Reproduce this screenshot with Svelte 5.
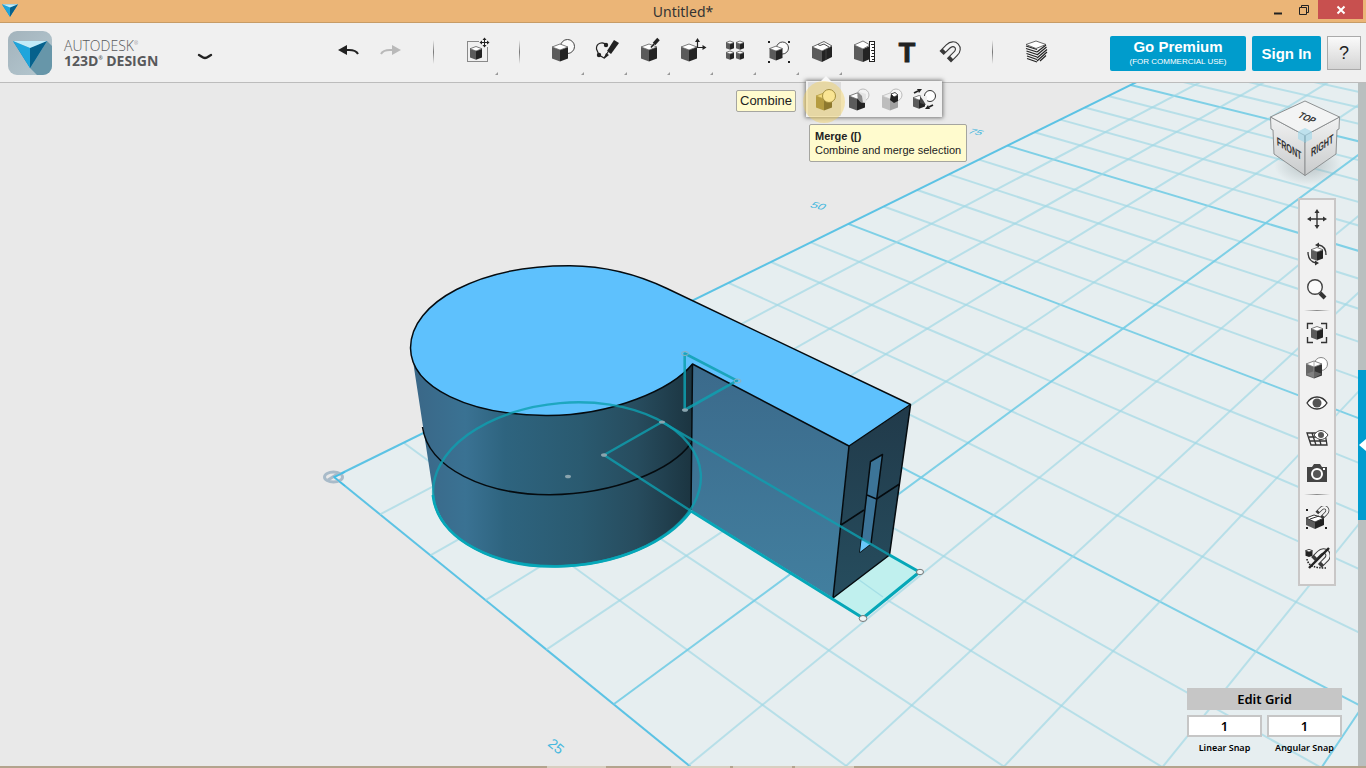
<script>
  let fileName = $state('Untitled*');
  let linearSnap = $state('1');
  let angularSnap = $state('1');
  let activeCombine = $state('merge');

  const tools = [
    { id: 'undo', label: 'Undo' },
    { id: 'redo', label: 'Redo' },
    { id: 'sep' },
    { id: 'transform', label: 'Transform', more: true },
    { id: 'sep' },
    { id: 'primitives', label: 'Primitives', more: true },
    { id: 'sketch', label: 'Sketch', more: true },
    { id: 'construct', label: 'Construct', more: true },
    { id: 'modify', label: 'Modify', more: true },
    { id: 'pattern', label: 'Pattern', more: true },
    { id: 'grouping', label: 'Grouping', more: true },
    { id: 'combine', label: 'Combine', more: true },
    { id: 'measure', label: 'Measure' },
    { id: 'text', label: 'Text' },
    { id: 'snap', label: 'Snap' },
    { id: 'sep' },
    { id: 'material', label: 'Material' }
  ];

  const combineTools = [
    { id: 'merge', label: 'Merge' },
    { id: 'subtract', label: 'Subtract' },
    { id: 'intersect', label: 'Intersect' },
    { id: 'separate', label: 'Separate' }
  ];

  const navTools = [
    { id: 'pan', label: 'Pan' },
    { id: 'orbit', label: 'Orbit' },
    { id: 'zoom', label: 'Zoom' },
    { id: 'sep' },
    { id: 'fit', label: 'Fit' },
    { id: 'shade', label: 'Materials and outlines' },
    { id: 'eye', label: 'Show and hide' },
    { id: 'grid', label: 'Grid visibility' },
    { id: 'camera', label: 'Screenshot' },
    { id: 'sep' },
    { id: 'groupsnap', label: 'Group when snapping', tall: true },
    { id: 'nosnap', label: 'Snapping off', tall: true }
  ];

  // ground plane to screen, u runs up the left edge and v down it
  function project(u, v) {
    const w = 1 + 0.04114 * u - 0.0424 * v;
    return [(334 + 86.34 * u + 29.92 * v) / w, (477 - 16.1 * u + 15.6 * v) / w];
  }

  function gridLine(u1, v1, u2, v2) {
    const [x1, y1] = project(u1, v1);
    const [x2, y2] = project(u2, v2);
    return { x1, y1, x2, y2 };
  }

  const U_MAX = 45;
  const V_MAX = 20;
  const gridLines = [];
  for (let u = 0; u <= U_MAX; u++) {
    gridLines.push({ ...gridLine(u, 0, u, V_MAX), major: u % 5 === 0, edge: u === 0 });
  }
  for (let v = 0; v <= V_MAX; v++) {
    gridLines.push({ ...gridLine(0, v, U_MAX, v), major: v % 5 === 0, edge: v === 0 });
  }
  const floor = [[0, 0], [U_MAX, 0], [U_MAX, V_MAX], [0, V_MAX]].map(([u, v]) => project(u, v).join(',')).join(' ');
</script>

{#snippet cube(x, y, s, left = '#5b5b5b', right = '#232323', top = '#fff')}
  {@const d = s * 0.375}
  {@const h = s * 1.45}
  <polygon points="{x - s},{y - d} {x},{y} {x},{y + h} {x - s},{y + h - d}" fill={left} />
  <polygon points="{x + s},{y - d} {x},{y} {x},{y + h} {x + s},{y + h - d}" fill={right} />
  <polygon points="{x},{y - 2 * d} {x + s},{y - d} {x},{y} {x - s},{y - d}" fill={top} stroke={left} stroke-width="0.8" />
{/snippet}

{#snippet magnet()}
  <path d="M-7 0L0 -7C7 -14 15 -5 8 1L1 8" fill="none" stroke="#3a3a3a" stroke-width="6.4" />
  <path d="M-4 -3L0 -7C7 -14 15 -5 8 1L4 5" fill="none" stroke="#f4f4f4" stroke-width="4" />
{/snippet}

{#snippet logo()}
  <polygon points="0,0 34,0 17,27" fill="#0a7fb2" />
  <polygon points="0,0 17,7 17,27" fill="#1ea5dc" />
  <polygon points="34,0 17,7 17,27" fill="#06618c" />
  <polygon points="0,0 34,0 17,7" fill="#c3ebf8" />
{/snippet}

{#snippet toolIcon(id)}
  {#if id === 'undo'}
    <path d="M-9 -2L0 -7V3Z" fill="#222" />
    <path d="M-1 -2H2C7 -2 10 0 11 2" fill="none" stroke="#222" stroke-width="2" />
  {:else if id === 'redo'}
    <path d="M11 -2L2 -7V3Z" fill="#b9b9b9" />
    <path d="M3 -2H0C-5 -2 -8 0 -9 2" fill="none" stroke="#b9b9b9" stroke-width="2" />
  {:else if id === 'transform'}
    <rect x="-8.5" y="-10.5" width="20" height="20" fill="none" stroke="#222" stroke-dasharray="1 1" />
    <rect x="3" y="-15" width="11" height="10" fill="#f0f0f0" />
    {@render cube(0, -1, 6)}
    <path d="M8.500 -13V-6M5 -9.500H12" stroke="#222" />
    <path d="M8.500 -14.500L6.500 -12H10.500ZM8.500 -4.500L6.500 -7H10.500ZM3.500 -9.500L6 -11.500V-7.500ZM13.500 -9.500L11 -11.500V-7.500Z" fill="#222" />
  {:else if id === 'primitives'}
    <circle cx="5.500" cy="-5.500" r="7" fill="#fafafa" stroke="#444" />
    {@render cube(-2, -2, 8)}
  {:else if id === 'sketch'}
    <path d="M1 -7C-2 -11 -9 -9 -8.500 -3L-6 3L-1 6L3 0" fill="none" stroke="#222" stroke-width="1.200" />
    <circle cx="1" cy="-7" r="2.200" fill="#222" />
    <circle cx="-6" cy="3" r="2.200" fill="#222" />
    <path d="M9 -12L14 -9L6 2L2 -1Z" fill="#222" />
    <path d="M1 1L4 3L-1 7Z" fill="#222" />
  {:else if id === 'construct'}
    {@render cube(1, -2, 8)}
    <path d="M10.500 -13L6 -8" stroke="#222" stroke-width="3.400" />
    <path d="M6 -8L3 -4.500" stroke="#222" stroke-width="1.600" />
  {:else if id === 'modify'}
    {@render cube(-2, -2, 8)}
    <path d="M6.500 -11V-4.500H13" fill="none" stroke="#222" stroke-width="1.200" />
    <path d="M6.500 -14L4 -10H9ZM15.500 -4.500L11.500 -7V-2Z" fill="#222" />
  {:else if id === 'pattern'}
    {#each [[-4, -8], [6, -8], [-4, 2], [6, 2]] as [x, y]}
      {@render cube(x, y, 4)}
    {/each}
  {:else if id === 'grouping'}
    <circle cx="5.500" cy="-4" r="6" fill="#fafafa" stroke="#444" />
    {@render cube(-1, -1, 6.500)}
    <path d="M-9 -11h2v2h-2ZM11 -11h2v2h-2ZM-9 9h2v2h-2ZM11 9h2v2h-2Z" fill="#222" />
  {:else if id === 'combine'}
    <path d="M-8 -5L2 -1V10L-8 6Z" fill="#5b5b5b" />
    <path d="M2 -1L12 -6V5L2 10Z" fill="#232323" />
    <path d="M-8 -5L4 -10.500L12 -6L2 -1Z" fill="#fff" stroke="#444" stroke-width="0.800" />
    <path d="M-2 -7.500L0 -6.500L4 -8L9 -5" fill="none" stroke="#333" stroke-width="0.900" />
    <path d="M6 -3V8" stroke="#555" stroke-width="0.600" />
  {:else if id === 'measure'}
    <path d="M-9 -7L0 -3V10L-9 7Z" fill="#5b5b5b" />
    <path d="M0 -3L7 -6V7L0 10Z" fill="#232323" />
    <path d="M-9 -7L0 -11L7 -7L0 -3Z" fill="#fff" stroke="#555" stroke-width="0.800" />
    <rect x="6.500" y="-10.500" width="5" height="20" fill="#fff" stroke="#222" />
    <path d="M8 -7.500h3M9 -4.500h2M8 -1.500h3M9 1.500h2M8 4.500h3M9 7.500h2" stroke="#222" />
  {:else if id === 'text'}
    <text x="1" y="10" text-anchor="middle" class="letter">T</text>
  {:else if id === 'snap'}
    <g transform="translate(-1 1) scale(0.920)">{@render magnet()}</g>
  {:else if id === 'material'}
    <path d="M-9 -8L1 -3.500L11 -8V4L1 10L-8 6Z" fill="#f0f0f0" />
    <path d="M-9 -6L2 -2.500M-9 -3.500L2 0M-8.500 -1L2 2.500M-8.500 1.500L2 5M-8 4L2 7.500M-8 6.500L2 10" fill="none" stroke="#222" stroke-width="1.200" />
    <path d="M2 0L11 -7M2 3L11.500 -5M2 6L12 -2.500M2 9L12 0M5 9L11 3.500" stroke="#222" stroke-width="1.200" />
    <path d="M-9 -7.500L1 -11L11 -7.500L1 -3.500Z" fill="#fff" stroke="#444" stroke-width="0.800" />
  {/if}
{/snippet}

{#snippet combineIcon(id)}
  {#if id === 'merge'}
    {@render cube(-1, -1, 8, '#8a7a38', '#4a4018', '#efe09a')}
    <circle cx="4" cy="-4" r="6.500" fill="#fdf3c0" stroke="#6e6434" />
  {:else if id === 'subtract'}
    <circle cx="5" cy="-5" r="6" fill="#f2f2f2" stroke="#bbb" />
    {@render cube(-1, -1, 8)}
    <path d="M1 -8C-2 -3 1 3 8 3V-6Z" fill="#e4e4e4" />
    <path d="M0 -8C-2 -3 1 3 5 3L4 -4Z" fill="#8b8b8b" />
  {:else if id === 'intersect'}
    <circle cx="5" cy="-5" r="6" fill="#f6f6f6" stroke="#bbb" />
    {@render cube(-1, -1, 8, '#bdbdbd', '#a2a2a2', '#eee')}
    <path d="M0 -6L4 -7.500L7 -5V1L3 3L-1 0Z" fill="#222" />
    <path d="M0 -6L4 -7.500L7 -5L3 -3Z" fill="#fff" stroke="#333" stroke-width="0.800" />
  {:else}
    <circle cx="6" cy="-4" r="5.500" fill="#fff" stroke="#333" />
    {@render cube(-5, 0, 6)}
    <path d="M-3 -4C-4 1 -1 4 3 4V-4Z" fill="#eee" />
    <path d="M-4 -4L-1 0L2 5L-4 3Z" fill="#444" />
    <path d="M-10 -7L-6 -9M9 5L5 7" stroke="#222" stroke-width="1.800" />
    <path d="M-2 -11L-7 -11L-5 -7ZM1 9L6 9L4 5Z" fill="#222" />
  {/if}
{/snippet}

{#snippet navIcon(id)}
  {#if id === 'pan'}
    <path d="M0 -8V8M-8 0H8" stroke="#333" stroke-width="1.400" />
    <path d="M0 -10L-2.500 -6H2.500ZM0 10L-2.500 6H2.500ZM-10 0L-6 -2.500V2.500ZM10 0L6 -2.500V2.500Z" fill="#333" />
  {:else if id === 'orbit'}
    {@render cube(0, -2, 6)}
    <path d="M2 -9C7 -8 9 -4 9 1M-9 -2C-9 4 -6 8 -1 9" fill="none" stroke="#333" stroke-width="1.300" />
    <path d="M-2 -9L2 -11.500V-6.500ZM2 9L-2 6.500V11.500Z" fill="#333" />
  {:else if id === 'zoom'}
    <circle cx="-2" cy="-2" r="7.300" fill="#fafafa" stroke="#444" stroke-width="1.400" />
    <path d="M3 4L8 9" stroke="#333" stroke-width="4" />
  {:else if id === 'fit'}
    {@render cube(0, -2, 6)}
    <path d="M-9.500 -4V-9.500H-4M4 -9.500H9.500V-4M9.500 4V9.500H4M-4 9.500H-9.500V4" fill="none" stroke="#333" stroke-width="1.400" />
  {:else if id === 'shade'}
    <circle cx="4" cy="-4" r="6.500" fill="#fff" stroke="#888" />
    {@render cube(-3, -1, 8, '#666', '#333')}
    <path d="M-11 6L-3 3L5 6L-3 10Z" fill="#999" opacity="0.500" />
    <path d="M-3 -7V3" stroke="#999" stroke-width="0.800" />
  {:else if id === 'eye'}
    <path d="M-10 0C-5 -8 5 -8 10 0C5 8 -5 8 -10 0Z" fill="#fff" stroke="#333" stroke-width="1.300" />
    <circle r="4.500" fill="#555" />
  {:else if id === 'grid'}
    <path d="M-10 -5H8L10 7H-6ZM-8 -1H9M-7 3H10M-5 -5L-1 7M1 -5L4 7" fill="none" stroke="#333" stroke-width="1.300" />
    <path d="M-3 -3C1 -9 7 -9 11 -3C7 3 1 3 -3 -3Z" fill="#fff" stroke="#444" />
    <circle cx="4" cy="-3" r="3" fill="#555" />
  {:else if id === 'camera'}
    <path d="M-10 -6H-5L-3 -9H3L5 -6H10V9H-10Z" fill="#444" />
    <circle cx="0" cy="1" r="5" fill="#555" stroke="#fff" stroke-width="2" />
    <rect x="6" y="-5" width="2" height="2" fill="#fff" />
  {:else if id === 'groupsnap'}
    <path d="M-11 -1L-2 3V10L-11 6Z" fill="#5b5b5b" />
    <path d="M-2 3L7 -1V6L-2 10Z" fill="#232323" />
    <path d="M-11 -1L-3 -4L7 -1L-2 3Z" fill="#fff" stroke="#333" />
    <path d="M-7 0L2 -3" stroke="#333" />
    <g transform="translate(4 -6) scale(0.600)">{@render magnet()}</g>
    <path d="M-11 -10h2v2h-2ZM-11 8h2v2h-2ZM8 8h2v2h-2Z" fill="#222" />
  {:else}
    {@render cube(-8, -7, 3.500, '#222', '#222')}
    <path d="M-10 0C-9 7 -2 9 9 9" fill="none" stroke="#222" stroke-width="1.600" stroke-dasharray="1.500 1.200" />
    <g transform="translate(2 0) scale(0.850)">{@render magnet()}</g>
    <path d="M-8 9L12 -11" stroke="#222" stroke-width="2.400" />
  {/if}
{/snippet}

<div class="app">
  <header class="titlebar">
    <svg class="app-icon" viewBox="0 0 34 27" aria-hidden="true">{@render logo()}</svg>
    <h1>{fileName}</h1>
    <div class="window-buttons">
      <button aria-label="Minimize"><svg viewBox="0 0 12 12"><path d="M2 9.500H10" stroke="#222" stroke-width="2" /></svg></button>
      <button aria-label="Restore"><svg viewBox="0 0 12 12"><path d="M1.500 3.500H8.500V10.500H1.500ZM3.500 3V1.500H10.500V8.500H9" fill="none" stroke="#222" /></svg></button>
      <button class="close" aria-label="Close"><svg viewBox="0 0 12 12"><path d="M2.500 2.500L9.500 9.500M9.500 2.500L2.500 9.500" stroke="#fff" stroke-width="2" /></svg></button>
    </div>
  </header>

  <div class="toolbar">
    <div class="brand">
      <svg class="brand-logo" viewBox="0 0 44 44" aria-hidden="true">
        <defs>
          <linearGradient id="tile" x1="0" y1="0" x2="1" y2="1">
            <stop offset="0" stop-color="#a3b3bc" />
            <stop offset="1" stop-color="#b5c8d0" />
          </linearGradient>
          <clipPath id="tileclip"><rect width="44" height="44" rx="9" /></clipPath>
        </defs>
        <g clip-path="url(#tileclip)">
          <rect width="44" height="44" fill="url(#tile)" />
          <path d="M39 10L44 15V44H29L22 37Z" fill="#6796a9" />
        </g>
        <g transform="translate(5 10)">{@render logo()}</g>
      </svg>
      <div class="brand-name">
        <span class="light">AUTODESK<sup>®</sup></span>
        <span class="heavy">123D<sup>®</sup> DESIGN</span>
      </div>
      <button class="menu-toggle" aria-label="Application menu">
        <svg viewBox="0 0 16 8"><path d="M2 2C4 3 6 5 8 5C10 5 12 3 14 2" fill="none" stroke="#222" stroke-width="2.400" stroke-linecap="round" /></svg>
      </button>
    </div>

    <div class="tools">
      {#each tools as tool}
        {#if tool.id === 'sep'}
          <span class="separator"></span>
        {:else}
          <button class="tool" aria-label={tool.label}>
            <svg viewBox="-21 -29 43 59">
              {@render toolIcon(tool.id)}
              {#if tool.more}<path d="M22 20V23H19Z" fill="#999" />{/if}
            </svg>
          </button>
        {/if}
      {/each}
    </div>

    <div class="account">
      <button class="premium"><strong>Go Premium</strong><small>(FOR COMMERCIAL USE)</small></button>
      <button class="signin">Sign In</button>
      <button class="help">?</button>
    </div>
  </div>

  <main class="workspace">
    <svg class="scene" viewBox="0 83 1366 683" preserveAspectRatio="xMidYMid slice" aria-label="Model view">
      <defs>
        <linearGradient id="cylinder" gradientUnits="userSpaceOnUse" x1="412" y1="0" x2="693" y2="0">
          <stop offset="0" stop-color="#3a6787" />
          <stop offset="0.190" stop-color="#3a7293" />
          <stop offset="0.330" stop-color="#2e647f" />
          <stop offset="0.600" stop-color="#2a5a70" />
          <stop offset="0.800" stop-color="#274c5e" />
          <stop offset="1" stop-color="#1b3440" />
        </linearGradient>
        <linearGradient id="wall" x1="0" y1="0" x2="0" y2="1">
          <stop offset="0" stop-color="#3b6a8b" />
          <stop offset="1" stop-color="#427f9f" />
        </linearGradient>
        <linearGradient id="end" x1="0" y1="0" x2="0" y2="1">
          <stop offset="0" stop-color="#213a4a" />
          <stop offset="1" stop-color="#264d5e" />
        </linearGradient>
        <linearGradient id="cubeface" x1="0" y1="0" x2="0" y2="1">
          <stop offset="0" stop-color="#f1f2f2" />
          <stop offset="1" stop-color="#c9cbcc" />
        </linearGradient>
        <radialGradient id="shadow">
          <stop offset="0" stop-color="#8a9699" stop-opacity="0.500" />
          <stop offset="1" stop-color="#8a9699" stop-opacity="0" />
        </radialGradient>
      </defs>

      <polygon points={floor} fill="#e6eef0" />
      {#each gridLines as line}
        <line
          x1={line.x1}
          y1={line.y1}
          x2={line.x2}
          y2={line.y2}
          class="grid-line"
          class:major={line.major}
          class:edge={line.edge}
        />
      {/each}

      <g class="grid-label">
        <text transform="translate(547 745) rotate(40)">25</text>
        <text transform="matrix(0.900 0.200 -0.500 0.550 809 207)">50</text>
        <text transform="matrix(0.850 0.150 -0.500 0.450 967 133)">75</text>
      </g>

      <g fill="none" stroke="#a9bbc9" stroke-width="3">
        <ellipse cx="333.500" cy="477" rx="9" ry="5" />
        <path d="M328 480L339 473" />
      </g>
      <path d="M345 472L334 477L345 486" fill="none" stroke="#45bde4" stroke-width="1.500" />

      <polygon points="833,598 889,555 919,572 863,618" fill="#c0f0ee" />
      <path d="M855 577L883 597" stroke="#a5dfe6" stroke-width="1.500" />

      <!-- extruded body -->
      <path d="M411 348L433 492C438 540 496 569 558 566.500C618 565 668 542 691 510L692.500 364L560 300Z" fill="url(#cylinder)" />
      <polygon points="692.500,364 849,446 833,598 691,510" fill="url(#wall)" />
      <polygon points="849,446 910.500,405 889.500,555 833,598" fill="url(#end)" />
      <g stroke="#050b0f" stroke-width="1.500" fill="none" stroke-linejoin="round">
        <path d="M410.500 348C410.500 302 480 265.500 570 265.700C610 266 641 276 667 288.500L910.500 404.500L849 446L692.500 364C672 389 612 416 546 415.500C470 415 411 388 410.500 348Z" fill="#5ec1fd" />
        <path d="M422.500 427C428 468 485 495 550 494.700C615 494 672 470 691 443" />
        <path d="M692.500 364L691 510M849 446L833 598L889.500 555L910.500 405M841 525L864 510M876.500 499L899.500 484" />
        <path d="M870.500 461.500L882.500 454.500L871 543.500L860 552Z" fill="#3c7498" />
        <path d="M861.500 540L871 543.500L860 552Z" fill="#6bc6f9" stroke="none" />
        <path d="M867 495L876.500 499" />
      </g>

      <!-- sketch outlines seen through the body -->
      <g fill="none" stroke="#0ea0b0" stroke-linejoin="round">
        <ellipse cx="567" cy="484.300" rx="134.200" ry="81.500" transform="rotate(-4.800 567 484.300)" stroke-width="2.400" opacity="0.800" />
        <path d="M432.800 495C438 540 496 568 558 566.500C618 565 668 542 691 511" stroke-width="2.600" stroke="#05a7b8" />
        <path d="M691 511L604 455L662 422L889.500 555" stroke-width="2.400" opacity="0.800" />
        <path d="M691 511L863 618L919.500 572L889.500 555" stroke-width="3" stroke="#05a7b8" />
        <path d="M684.700 353.500L737 380.700L684.700 410Z" stroke-width="2.600" opacity="0.850" />
      </g>
      <g fill="#8aa4ae">
        <ellipse cx="568" cy="476.500" rx="3" ry="1.800" />
        <ellipse cx="604" cy="455" rx="3" ry="1.800" />
        <ellipse cx="662" cy="422" rx="3" ry="1.600" />
        <ellipse cx="685" cy="410" rx="3" ry="1.800" />
      </g>
      <g fill="none" stroke="#8fb1bd">
        <ellipse cx="685" cy="353.500" rx="3.500" ry="2" />
        <ellipse cx="737.500" cy="381" rx="3.500" ry="2" />
      </g>
      <g fill="#eef4f5" stroke="#777">
        <ellipse cx="920" cy="572" rx="3.500" ry="2.700" />
        <ellipse cx="863" cy="618.500" rx="3.800" ry="3" />
      </g>

      <!-- view cube -->
      <ellipse cx="1308" cy="165" rx="34" ry="20" fill="url(#shadow)" />
      <g stroke="#8e9192" stroke-width="1">
        <path d="M1270.500 117L1305 135.500V175.500L1274 154L1273 130L1271 129Z" fill="url(#cubeface)" />
        <path d="M1339.500 117L1305 135.500V175.500L1336 154L1337 130L1339 129Z" fill="url(#cubeface)" />
        <path d="M1305 101L1339.500 117L1305 135.500L1270.500 117Z" fill="#f3f4f4" />
      </g>
      <path d="M1305 128L1312 131.500V139L1305 142.500L1298 139V131.500Z" fill="#a6d8ea" opacity="0.700" />
      <path d="M1305 135.500V143" stroke="#7fa9b8" />
      <g class="cube-label">
        <text transform="matrix(0.600 0.370 0.050 1 1277 145)">FRONT</text>
        <text transform="matrix(0.600 -0.400 0 1 1311 157)">RIGHT</text>
        <text transform="matrix(0.620 0.280 -0.600 0.600 1297 117)">TOP</text>
      </g>
    </svg>

    <div class="combine-menu">
      {#each combineTools as tool}
        <button
          class="combine-tool"
          class:active={activeCombine === tool.id}
          aria-label={tool.label}
          onclick={() => (activeCombine = tool.id)}
        >
          <svg viewBox="-17 -18 33 34">{@render combineIcon(tool.id)}</svg>
        </button>
      {/each}
      <span class="halo"></span>
    </div>
    <span class="tip tip-name">Combine</span>
    <div class="tip tip-detail" role="tooltip">
      <strong>Merge ([)</strong>
      <span>Combine and merge selection</span>
    </div>

    <nav class="nav-bar">
      {#each navTools as tool}
        {#if tool.id === 'sep'}
          <span class="nav-separator"></span>
        {:else}
          <button class="nav-tool" class:tall={tool.tall} aria-label={tool.label}>
            <svg viewBox="-13 -13 26 26">{@render navIcon(tool.id)}</svg>
          </button>
        {/if}
      {/each}
    </nav>

    <div class="snap-panel">
      <button class="edit-grid">Edit Grid</button>
      <div class="snap-field">
        <input id="linear" bind:value={linearSnap} />
        <label for="linear">Linear Snap</label>
      </div>
      <div class="snap-field">
        <input id="angular" bind:value={angularSnap} />
        <label for="angular">Angular Snap</label>
      </div>
    </div>

    <aside class="side-rail">
      <button aria-label="Open parts panel"><svg viewBox="0 0 8 14"><path d="M8 1V13L1 7Z" fill="#fff" /></svg></button>
    </aside>
  </main>

  <footer class="taskbar"><span></span><span></span><span></span><span></span></footer>
</div>

<style>
  :global(body) {
    margin: 0;
  }

  .app {
    display: flex;
    flex-direction: column;
    min-height: 100vh;
    font-family: "Liberation Sans", Arial, sans-serif;
    color: #222;
    background: #e9e9e9;
  }

  button {
    padding: 0;
    border: 0;
    background: none;
    font-family: inherit;
    color: inherit;
    cursor: pointer;
  }

  svg {
    display: block;
  }

  .titlebar {
    display: grid;
    grid-template-columns: 1fr auto 1fr;
    height: 22px;
    background: #ebb577;
    border-bottom: 1px solid #c79c66;
  }

  .app-icon {
    width: 16px;
    height: 13px;
    margin: 4px 0 0 2px;
  }

  h1 {
    margin: 0;
    font: 400 14px/24px "Noto Sans", sans-serif;
    color: #333;
  }

  .window-buttons {
    display: flex;
    justify-content: flex-end;
    align-items: flex-start;
    padding-right: 3px;
  }

  .window-buttons button {
    display: flex;
    align-items: center;
    justify-content: center;
    width: 26px;
    height: 19px;
  }

  .window-buttons svg {
    width: 12px;
    height: 12px;
  }

  .window-buttons .close {
    width: 45px;
    margin-left: 1px;
    background: #c8504f;
  }

  .toolbar {
    display: flex;
    height: 59px;
    background: #f0f0f0;
    border-bottom: 1px solid #bcbcbc;
  }

  .brand {
    display: flex;
    align-items: center;
    flex: 0 0 318px;
    padding-left: 8px;
  }

  .brand-logo {
    width: 44px;
    height: 44px;
  }

  .brand-name {
    display: flex;
    flex-direction: column;
    width: 133px;
    margin-left: 12px;
    font: 14px/15px "Open Sans", "Noto Sans", sans-serif;
    color: #58595b;
  }

  .brand-name .light {
    font-weight: 300;
  }

  .brand-name .heavy {
    font-weight: 700;
  }

  .brand-name sup {
    font-size: 5px;
    line-height: 1px;
    vertical-align: 6px;
  }

  .menu-toggle {
    margin-top: 8px;
  }

  .menu-toggle svg {
    width: 16px;
    height: 8px;
  }

  .tools {
    display: flex;
  }

  .tool svg {
    width: 43px;
    height: 59px;
  }

  .letter {
    font-size: 27px;
    font-weight: 700;
    fill: #222;
    stroke: #222;
    stroke-width: 1px;
  }

  .separator {
    width: 1px;
    height: 24px;
    margin: 17px 21px 0;
    background: linear-gradient(#f0f0f0, #777, #f0f0f0);
  }

  .account {
    display: flex;
    gap: 6px;
    margin: 13px 5px 0 auto;
  }

  .premium,
  .signin {
    height: 35px;
    border-radius: 2px;
    background: #009ccc;
    color: #fff;
    font-size: 15px;
    font-weight: 700;
  }

  .premium {
    width: 136px;
  }

  .premium strong {
    display: block;
    line-height: 17px;
  }

  .premium small {
    display: block;
    font-size: 8px;
    font-weight: 400;
    line-height: 14px;
  }

  .signin {
    width: 69px;
  }

  .help {
    width: 34px;
    height: 34px;
    border: 1px solid #aaa;
    background: linear-gradient(#fafafa, #d4d4d4);
    font-size: 18px;
  }

  .workspace {
    position: relative;
    flex: 1;
  }

  .scene {
    position: absolute;
    inset: 0;
    width: 100%;
    height: 100%;
    overflow: hidden;
  }

  .grid-line {
    stroke: #9fd8e5;
    stroke-width: 2;
    opacity: 0.65;
  }

  .grid-line.major {
    stroke: #74cde6;
    opacity: 0.9;
  }

  .grid-line.edge {
    stroke: #4dbfe4;
  }

  .grid-label {
    font-size: 14px;
    fill: #45b8de;
  }

  .cube-label {
    font-size: 12px;
    font-weight: 700;
    fill: #333;
  }

  .combine-menu {
    position: absolute;
    top: -2px;
    left: 806px;
    display: flex;
    height: 34px;
    padding: 1px 2px;
    background: #f1f1f1;
    box-shadow: 0 0 4px 1px #777;
  }

  .combine-menu::before {
    content: "";
    position: absolute;
    top: -5px;
    left: 14px;
    border: 6px solid transparent;
    border-top: 0;
    border-bottom-color: #f8f8f8;
  }

  .combine-tool.active {
    background: #dcdcdc;
  }

  .combine-tool svg {
    width: 33px;
    height: 34px;
  }

  .halo {
    position: absolute;
    top: 0;
    left: -3px;
    width: 42px;
    height: 42px;
    border-radius: 50%;
    background: #f5cf50;
    opacity: 0.4;
    pointer-events: none;
  }

  .tip {
    position: absolute;
    border: 1px solid #a5a5a0;
    border-radius: 2px;
    background: #fffbce;
    white-space: nowrap;
  }

  .tip-name {
    top: 7px;
    left: 736px;
    padding: 0 3px;
    font-size: 13px;
    line-height: 20px;
  }

  .tip-detail {
    top: 41px;
    left: 809px;
    padding: 4px 5px;
    font-size: 11px;
    line-height: 14px;
  }

  .tip-detail strong,
  .tip-detail span {
    display: block;
  }

  .nav-bar {
    position: absolute;
    top: 115px;
    right: 30px;
    display: flex;
    flex-direction: column;
    width: 34px;
    padding: 1px 0 5px;
    border: 2px solid #c9c7c7;
    background: #f1f1f1;
  }

  .nav-tool {
    display: flex;
    align-items: center;
    justify-content: center;
    height: 35px;
  }

  .nav-tool.tall {
    height: 40px;
  }

  .nav-tool svg {
    width: 26px;
    height: 26px;
  }

  .nav-separator {
    height: 1px;
    margin: 4px;
    background: linear-gradient(90deg, #f1f1f1, #888, #f1f1f1);
  }

  .snap-panel {
    position: absolute;
    right: 24px;
    bottom: 11px;
    display: grid;
    grid-template-columns: 75px 75px;
    gap: 5px;
    font-family: "Noto Sans", sans-serif;
    color: #000;
  }

  .edit-grid {
    grid-column: 1 / 3;
    height: 22px;
    background: #c6c6c6;
    font-size: 13px;
    font-weight: 600;
  }

  .snap-field {
    display: flex;
    flex-direction: column;
    align-items: center;
  }

  .snap-field input {
    box-sizing: border-box;
    width: 100%;
    height: 22px;
    padding: 0;
    border: 2px solid #c6c6c6;
    border-radius: 0;
    background: #fff;
    font: 600 13px "Noto Sans", sans-serif;
    text-align: center;
  }

  .snap-field label {
    margin-top: 4px;
    font-size: 9px;
    font-weight: 600;
    line-height: 14px;
  }

  .side-rail {
    position: absolute;
    top: 0;
    right: 0;
    bottom: 0;
    width: 8px;
    background: #b9bfbf;
  }

  .side-rail button {
    display: flex;
    align-items: center;
    width: 8px;
    height: 150px;
    margin-top: 287px;
    background: #009ccf;
  }

  .side-rail svg {
    width: 8px;
    height: 14px;
  }

  .taskbar {
    display: flex;
    gap: 3px;
    height: 2px;
    padding-left: 547px;
    background: #b3a48d;
  }

  .taskbar span {
    width: 59px;
    background: #d8cfc0;
  }

  .taskbar span:first-child {
    margin-right: 62px;
  }
</style>
